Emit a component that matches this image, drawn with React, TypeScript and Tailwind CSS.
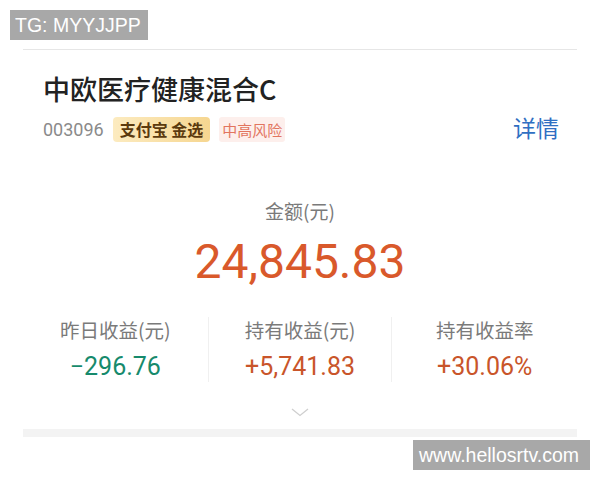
const cn = '"Noto Sans CJK SC", "Noto Sans", sans-serif';
const num = 'Roboto, "Noto Sans CJK SC", sans-serif';

function Stat({ label, value, color }: { label: string; value: string; color: string }) {
  return (
    <div className="flex flex-col items-center">
      <div className="text-[19.5px] leading-[26px] text-[#7a7a7a]" style={{ fontFamily: cn }}>
        {label}
      </div>
      <div className={`mt-[9px] text-[25px] leading-[30px] ${color}`} style={{ fontFamily: num }}>
        {value}
      </div>
    </div>
  );
}

export default function App() {
  return (
    <div className="relative w-[600px] h-[480px] bg-white overflow-hidden">
      {/* watermark tags */}
      <div
        className="absolute left-[10px] top-[10px] w-[138px] h-[30px] bg-[#a8a8a8] text-white text-[19.5px] leading-[30px] pl-[5px]"
        style={{ fontFamily: '"Liberation Sans", Arial, sans-serif' }}
      >
        TG: MYYJJPP
      </div>
      <div
        className="absolute left-[413px] top-[440px] w-[177px] h-[30px] bg-[#a8a8a8] text-white text-[19.5px] leading-[30px] pl-[6px]"
        style={{ fontFamily: '"Liberation Sans", Arial, sans-serif' }}
      >
        www.hellosrtv.com
      </div>

      <div className="pt-[49px] mx-[23px]">
        <div className="border-t border-[#e6e6e6]">
          {/* fund header */}
          <div className="px-[20px] pt-[21px]">
            <div className="text-[27px] leading-[36px] font-medium text-[#222]" style={{ fontFamily: cn }}>
              中欧医疗健康混合C
            </div>
            <div className="mt-[8px] flex items-center h-[28px]">
              <span className="text-[18px] text-[#8a8a8a]" style={{ fontFamily: num }}>
                003096
              </span>
              <span
                className="ml-[9px] px-[7px] h-[25px] leading-[25px] rounded-[4px] bg-gradient-to-r from-[#fcebc0] to-[#f6d690] text-[#5b3a0e] text-[16px] font-bold"
                style={{ fontFamily: cn }}
              >
                支付宝 金选
              </span>
              <span
                className="ml-[9px] px-[3px] h-[25px] leading-[25px] rounded-[3px] bg-[#fdefec] text-[#e2755f] text-[15px]"
                style={{ fontFamily: cn }}
              >
                中高风险
              </span>
              <span className="ml-auto mr-[-2px] mb-[4px] text-[23px] text-[#2f6fc2]" style={{ fontFamily: cn }}>
                详情
              </span>
            </div>
          </div>

          {/* amount */}
          <div className="mt-[55px] flex flex-col items-center">
            <div className="text-[19px] leading-[26px] text-[#7a7a7a]" style={{ fontFamily: cn }}>
              金额(元)
            </div>
            <div className="mt-[10px] text-[48px] leading-[56px] text-[#d9592b]" style={{ fontFamily: num }}>
              24,845.83
            </div>
          </div>

          {/* earnings */}
          <div className="mt-[27px] grid grid-cols-3">
            <Stat label="昨日收益(元)" value="−296.76" color="text-[#168a6c]" />
            <div className="border-x border-[#f0f0f0]">
              <Stat label="持有收益(元)" value="+5,741.83" color="text-[#c9552a]" />
            </div>
            <Stat label="持有收益率" value="+30.06%" color="text-[#c9552a]" />
          </div>

          <div className="mt-[26px] flex justify-center">
            <svg width="18" height="9" viewBox="0 0 18 9" fill="none">
              <path d="M1 1l8 6.5L17 1" stroke="#cfcfcf" strokeWidth="1.3" />
            </svg>
          </div>

          <div className="mt-[12px] h-[8px] bg-[#f3f3f3]" />
        </div>
      </div>
    </div>
  );
}
